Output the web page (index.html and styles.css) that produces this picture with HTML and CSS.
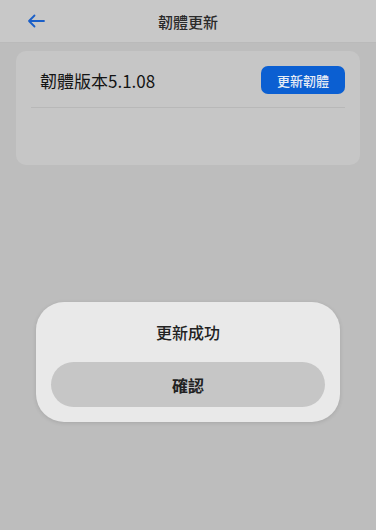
FILE: index.html
```html
<!DOCTYPE html>
<html lang="zh-Hant">
  <head>
    <meta charset="UTF-8" />
    <meta name="viewport" content="width=device-width, initial-scale=1.0" />
    <title>韌體更新</title>
    <link rel="stylesheet" href="styles.css">
  </head>
  <body>
    <div class="header">
      <button class="back" aria-label="返回">
        <svg width="18" height="14" viewBox="0 0 18 14">
          <path d="M17 7H2M7.5 1.5L2 7l5.5 5.5" fill="none" stroke="#1a5fc8" stroke-width="1.8" stroke-linecap="round" stroke-linejoin="round" />
        </svg>
      </button>
      <h1>韌體更新</h1>
    </div>

    <div class="card">
      <div class="row">
        <span class="version">韌體版本5.1.08</span>
        <button class="update-btn">更新韌體</button>
      </div>
      <div class="divider"></div>
    </div>

    <div class="overlay">
      <div class="dialog">
        <div class="dialog-title">更新成功</div>
        <button class="confirm">確認</button>
      </div>
    </div>
  </body>
</html>
```

FILE: styles.css
```css
* {
  box-sizing: border-box;
}
body {
  margin: 0;
  width: 376px;
  height: 530px;
  background-color: #bdbdbd;
  font-family: "Noto Sans CJK TC", "Noto Sans", sans-serif;
  color: #222;
  overflow: hidden;
}
.header {
  height: 43px;
  background-color: #c8c8c8;
  border-bottom: 1px solid #bababa;
  display: flex;
  align-items: center;
  justify-content: center;
  position: relative;
}
.header h1 {
  margin: 0;
  font-size: 15px;
  font-weight: 500;
  color: #2a2a2a;
}
.back {
  position: absolute;
  left: 27px;
  top: 14px;
  background: none;
  border: none;
  padding: 0;
  width: 18px;
  height: 14px;
  display: flex;
}
.card {
  margin: 8px 16px 0;
  height: 114px;
  background-color: #c6c6c6;
  border-radius: 10px;
  padding: 15px 15px 0 15px;
}
.row {
  display: flex;
  align-items: center;
  justify-content: space-between;
  height: 28px;
  padding-left: 9px;
}
.version {
  font-size: 17px;
  font-weight: 400;
  color: #141414;
}
.update-btn {
  width: 84px;
  height: 28px;
  background-color: #0b5fd2;
  border: none;
  border-radius: 7px;
  color: #e6ecf5;
  font-family: inherit;
  font-size: 13px;
  font-weight: 500;
  padding: 0;
}
.divider {
  margin-top: 13px;
  height: 1px;
  background-color: #b8b8b8;
}
.overlay {
  position: absolute;
  left: 0;
  top: 0;
  width: 376px;
  height: 530px;
  display: flex;
  justify-content: center;
  padding-top: 302px;
}
.dialog {
  width: 304px;
  height: 120px;
  background-color: #e9e9e9;
  border-radius: 28px;
  box-shadow: 0 1px 4px rgba(0, 0, 0, 0.12);
  padding: 18px 15px 0;
  display: flex;
  flex-direction: column;
  align-items: center;
}
.dialog-title {
  font-size: 16px;
  font-weight: 500;
  height: 24px;
  line-height: 24px;
  color: #222;
}
.confirm {
  margin-top: 18px;
  width: 274px;
  height: 45px;
  border: none;
  border-radius: 23px;
  background-color: #c6c6c6;
  font-family: inherit;
  font-size: 16px;
  font-weight: 700;
  color: #222;
}
```
